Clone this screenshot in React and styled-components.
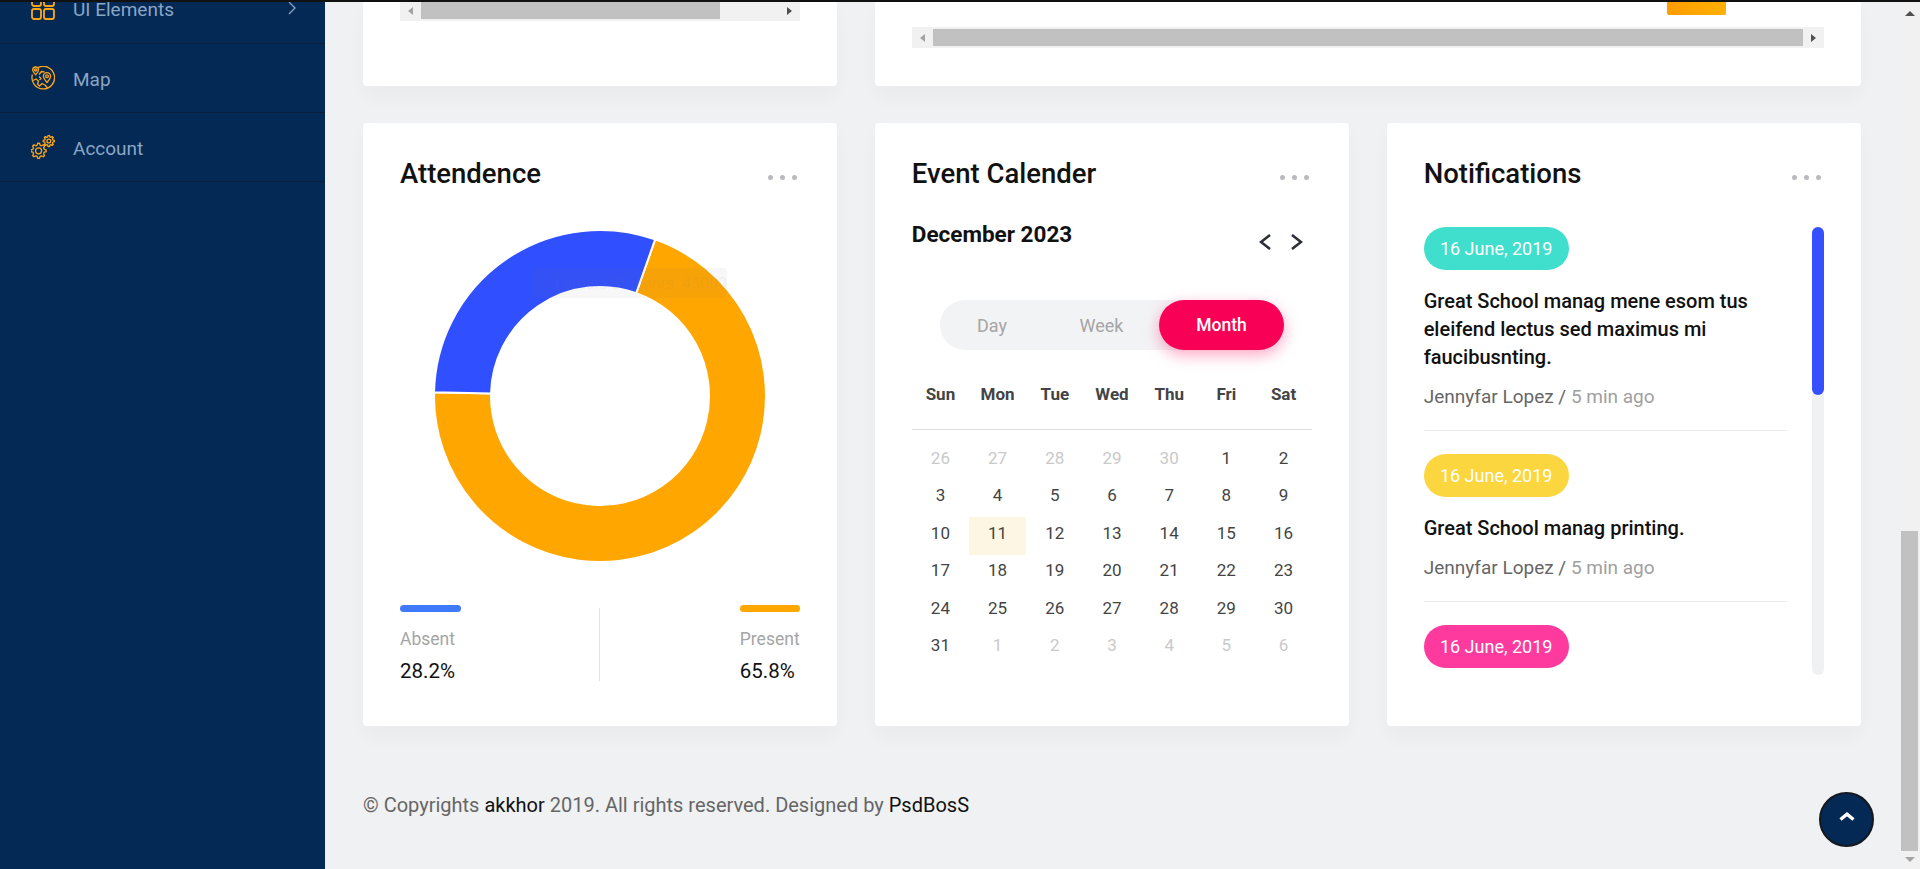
import React from 'react'
import styled, { createGlobalStyle } from 'styled-components'

const GlobalStyle = createGlobalStyle`
  * { box-sizing: border-box; }
  html, body { margin: 0; padding: 0; height: 100%; overflow: hidden; }
  body { font-family: Roboto, "Liberation Sans", sans-serif; background: #f0f1f3; }
`

const Page = styled.div`
  position: relative;
  width: 1920px;
  height: 869px;
  overflow: hidden;
  display: flex;
  flex-direction: column;
  background: #f0f1f3;
`
const TopLine = styled.div`
  height: 2px;
  flex: none;
  background: #111;
`
const Body = styled.div`
  flex: 1;
  min-height: 0;
  display: flex;
`
const Sidebar = styled.aside`
  width: 325px;
  flex: none;
  overflow: hidden;
  background: #042954;
`
const NavList = styled.nav`
  margin-top: -27px;
`
const NavRow = styled.div`
  height: 69px;
  padding: 0 28px ${p => p.$first ? '2px' : '0'} 31px;
  display: flex;
  align-items: center;
  border-bottom: 1px solid #0a1f3d;
  font-size: 19px;
  color: #8ba5c4;
  svg { flex: none; }
`
const NavLabel = styled.span`
  margin: 2px 0 0 18px;
  flex: 1;
`
const Main = styled.main`
  flex: 1;
  min-width: 0;
  padding: 0 40px 0 38px;
`
const TopRow = styled.div`
  display: grid;
  grid-template-columns: repeat(3, 1fr);
  column-gap: 37.5px;
  margin-bottom: 37px;
`
const TopCard = styled.section`
  grid-column: span ${p => p.$span || 1};
  height: 84px;
  padding: 0 37px;
  overflow: hidden;
  background: #fff;
  border-radius: 0 0 4px 4px;
  box-shadow: 0 10px 20px rgba(0, 0, 0, 0.03);
`
const Bar = styled.div`
  width: 59px;
  height: 13px;
  margin: 0 98px 12px auto;
  border-radius: 0 0 2px 2px;
  background: linear-gradient(90deg, #ff9d00, #ffb000);
`
const Strip = styled.div`
  display: grid;
  grid-template-columns: 21px 1fr 21px;
  height: 21px;
  margin-top: ${p => p.$clipped ? '-2px' : '0'};
  background: #f1f1f1;
`
const StripEnd = styled.div`
  display: flex;
  align-items: center;
  justify-content: center;
`
const StripTrack = styled.div`
  padding: 2px 0;
`
const StripThumb = styled.div`
  width: ${p => p.$width};
  height: 100%;
  background: #c1c1c1;
`
const Cards = styled.div`
  display: grid;
  grid-template-columns: repeat(3, 1fr);
  column-gap: 37.5px;
`
const Card = styled.section`
  height: 603px;
  padding: 30px 37px 0;
  background: #fff;
  border-radius: 4px;
  box-shadow: 0 10px 20px rgba(0, 0, 0, 0.03);
`
const CardHead = styled.header`
  height: 40px;
  display: flex;
  align-items: center;
  justify-content: space-between;
`
const CardTitle = styled.h3`
  margin: 0;
  font-size: 27.5px;
  font-weight: 500;
  color: #111;
`
const Dots = styled.div`
  display: flex;
  gap: 7px;
  margin: 8px 3px 0 0;
  span {
    width: 5px;
    height: 5px;
    border-radius: 50%;
    background: #b9b9c0;
  }
`
const DonutBox = styled.div`
  position: relative;
  height: 334px;
  margin-top: 36px;
  display: flex;
  justify-content: center;
`
const Tooltip = styled.div`
  position: absolute;
  left: 132px;
  top: 39px;
  width: 195px;
  height: 30px;
  padding-left: 6px;
  display: flex;
  align-items: center;
  gap: 3px;
  border-radius: 4px;
  font-size: 16px;
  white-space: nowrap;
  color: rgba(128, 128, 150, 0.08);
  background: rgba(120, 120, 120, 0.06);
  i {
    width: 16px;
    height: 16px;
    background: rgba(60, 80, 255, 0.07);
  }
`
const Legend = styled.div`
  display: flex;
  justify-content: space-between;
  margin-top: 42px;
`
const LegendItem = styled.div`
  width: 60.5px;
`
const LegendBar = styled.div`
  height: 7px;
  border-radius: 4px;
  background: ${p => p.$color};
`
const LegendLabel = styled.div`
  margin-top: 15px;
  font-size: 17.5px;
  line-height: 24px;
  color: #a5a5a5;
`
const LegendValue = styled.div`
  margin-top: 8px;
  font-size: 20.5px;
  line-height: 24px;
  font-weight: 400;
  color: #111;
`
const LegendRule = styled.div`
  width: 1px;
  height: 73px;
  margin: 3px 1px 0 0;
  background: #e3e3e3;
`
const MonthRow = styled.div`
  height: 107px;
  padding-top: 28px;
  display: flex;
  justify-content: space-between;
`
const MonthName = styled.div`
  font-size: 22.5px;
  line-height: 26px;
  font-weight: 700;
  color: #111;
`
const MonthNav = styled.div`
  display: flex;
  gap: 20px;
  margin: 13px 9px 0 0;
  height: 16px;
`
const Toggle = styled.div`
  width: 344px;
  height: 50px;
  margin: 0 auto;
  display: flex;
  border-radius: 25px;
  background: #f2f3f5;
`
const ToggleItem = styled.div`
  flex: ${p => p.$grow};
  display: flex;
  align-items: center;
  justify-content: center;
  border-radius: 25px;
  font-size: ${p => p.$active ? '17.5px' : '18px'};
  font-weight: ${p => p.$active ? 500 : 400};
  color: ${p => p.$active ? '#fff' : '#a5a5a5'};
  background: ${p => p.$active ? '#f80056' : 'transparent'};
  box-shadow: ${p => p.$active ? '0 5px 15px rgba(248, 0, 86, 0.35)' : 'none'};
`
const Weekdays = styled.div`
  display: grid;
  grid-template-columns: repeat(7, 1fr);
  padding: 32px 0 23px;
  border-bottom: 1px solid #dedede;
  font-size: 17px;
  line-height: 24px;
  font-weight: 700;
  color: #444;
  text-align: center;
`
const DayGrid = styled.div`
  display: grid;
  grid-template-columns: repeat(7, 1fr);
  grid-auto-rows: 37.5px;
  margin-top: 12px;
`
const Day = styled.div`
  padding-bottom: 6px;
  display: flex;
  align-items: center;
  justify-content: center;
  font-size: 17px;
  color: ${p => p.$muted ? '#c9c9c9' : '#444'};
  background: ${p => p.$today ? '#fdf6e3' : 'transparent'};
`
const NoticeBody = styled.div`
  height: 448px;
  margin-top: 34px;
  display: flex;
  justify-content: space-between;
`
const NoticeList = styled.div`
  width: 363px;
  overflow: hidden;
`
const Notice = styled.article`
  padding-bottom: 20.5px;
  margin-bottom: 23.5px;
  border-bottom: 1px solid #ececec;
`
const DatePill = styled.div`
  width: 145px;
  height: 42.5px;
  display: flex;
  align-items: center;
  justify-content: center;
  border-radius: 22px;
  font-size: 18px;
  color: #fff;
  background: ${p => p.$color};
`
const NoticeText = styled.p`
  margin: 17.5px 0 14px;
  font-size: 20px;
  line-height: 28px;
  font-weight: 500;
  color: #111;
`
const NoticeMeta = styled.div`
  font-size: 19px;
  line-height: 24px;
  color: #666;
  span { color: #a0a0a0; }
`
const ListTrack = styled.div`
  width: 12px;
  border-radius: 6px;
  background: #f0f1f3;
`
const ListThumb = styled.div`
  height: 168px;
  border-radius: 6px;
  background: #364fff;
`
const Footer = styled.footer`
  padding-top: 67px;
  font-size: 20px;
  line-height: 24px;
  color: #666;
  a { color: #111; }
`
const PageBar = styled.div`
  width: 19px;
  flex: none;
  padding-right: 2px;
  display: flex;
  flex-direction: column;
  background: #f1f1f1;
`
const PageArrow = styled.div`
  height: ${p => p.$height}px;
  flex: none;
  display: flex;
  align-items: ${p => p.$align};
  justify-content: center;
  padding: ${p => p.$pad};
`
const PageThumb = styled.div`
  height: 320px;
  flex: none;
  background: #c1c1c1;
`
const BackTop = styled.div`
  position: absolute;
  left: 1819px;
  top: 792px;
  width: 55px;
  height: 55px;
  padding-bottom: 6px;
  display: flex;
  align-items: center;
  justify-content: center;
  border: 2px solid #14181f;
  border-radius: 50%;
  background: #042954;
`

const ORANGE = '#ffa616'

function Triangle({ dir, fill }) {
  const pts = {
    left: '5,0 5,8 0,4',
    right: '0,0 0,8 5,4',
    up: '0,5 10,5 5,0',
    down: '0,0 10,0 5,5',
  }
  const w = dir === 'up' || dir === 'down' ? 10 : 5
  const h = dir === 'up' || dir === 'down' ? 5 : 8
  return (
    <svg width={w} height={h} viewBox={`0 0 ${w} ${h}`}>
      <polygon points={pts[dir]} fill={fill} />
    </svg>
  )
}

function ScrollStrip({ thumb, clipped }) {
  return (
    <Strip $clipped={clipped}>
      <StripEnd><Triangle dir="left" fill="#a3a3a3" /></StripEnd>
      <StripTrack><StripThumb $width={thumb} /></StripTrack>
      <StripEnd><Triangle dir="right" fill="#505050" /></StripEnd>
    </Strip>
  )
}

function GridIcon() {
  return (
    <svg width="24" height="24" viewBox="0 0 24 24" fill="none" stroke={ORANGE} strokeWidth="1.8">
      <rect x="1" y="1" width="9" height="9" rx="2" />
      <rect x="13" y="1" width="10" height="9" rx="2" />
      <rect x="1" y="13" width="9" height="10" rx="2" />
      <rect x="13" y="13" width="10" height="10" rx="2" />
    </svg>
  )
}

function MapIcon() {
  return (
    <svg width="24" height="24" viewBox="0 0 24 24" fill="none" stroke={ORANGE} strokeWidth="1.3" strokeLinejoin="round">
      <path d="M7 1.6A11.3 11.3 0 1 1 1.4 8.5" />
      <path d="M4.6 8.8C2.9 6.8 1.7 5.5 1.7 3.9a2.9 2.9 0 0 1 5.8 0c0 1.6-1.2 2.9-2.9 4.9z" />
      <circle cx="4.6" cy="3.9" r="1.1" />
      <path d="M16 16.5c-2.2-2.7-3.6-4.2-3.6-6.2a3.6 3.6 0 0 1 7.2 0c0 2-1.4 3.5-3.6 6.2z" />
      <circle cx="16" cy="10.3" r="1.4" />
      <path d="M8 8.5l2.5-3 3 .5M2 14.5l3-1.5 2.5 2-1 3 2 2 2.5-2.5 3 1.5 2.5 3M8 10.5l2 2-1.5 1.5" />
    </svg>
  )
}

function gearPath(cx, cy, outer, inner, teeth) {
  const pts = []
  const step = (Math.PI * 2) / teeth
  for (let i = 0; i < teeth; i++) {
    const a = i * step
    const radii = [[-0.32, inner], [-0.16, outer], [0.16, outer], [0.32, inner]]
    radii.forEach(([f, r]) => {
      const t = a + f * step
      pts.push(`${(cx + r * Math.cos(t)).toFixed(2)},${(cy + r * Math.sin(t)).toFixed(2)}`)
    })
  }
  return `M${pts.join('L')}Z`
}

function GearsIcon() {
  return (
    <svg width="24" height="24" viewBox="0 0 24 24" fill="none" stroke={ORANGE} strokeWidth="1.3" strokeLinejoin="round">
      <path d={gearPath(7.6, 15.8, 7.6, 5.8, 8)} />
      <circle cx="7.6" cy="15.8" r="3" />
      <path d={gearPath(17.8, 6, 5.6, 4.2, 8)} />
      <circle cx="17.8" cy="6" r="1.9" />
    </svg>
  )
}

function Chevron({ dir, color = '#2b2f38', width = 12, height = 16, stroke = 2.6 }) {
  const d = dir === 'left'
    ? `M${width - 1} 1L2 ${height / 2}L${width - 1} ${height - 1}`
    : `M1 1L${width - 2} ${height / 2}L1 ${height - 1}`
  return (
    <svg width={width} height={height} viewBox={`0 0 ${width} ${height}`} fill="none" stroke={color} strokeWidth={stroke}>
      <path d={d} />
    </svg>
  )
}

function AngleUp() {
  return (
    <svg width="16" height="9" viewBox="0 0 16 9" fill="none" stroke="#fff" strokeWidth="3.4">
      <path d="M1.5 7.5L8 2.2L14.5 7.5" />
    </svg>
  )
}

// clockwise from 12 o'clock, in degrees
function arc(from, to, R, r, c) {
  const p = (deg, rad) => {
    const t = ((deg - 90) * Math.PI) / 180
    return `${(c + rad * Math.cos(t)).toFixed(2)} ${(c + rad * Math.sin(t)).toFixed(2)}`
  }
  const big = to - from > 180 ? 1 : 0
  return `M${p(from, R)}A${R} ${R} 0 ${big} 1 ${p(to, R)}L${p(to, r)}A${r} ${r} 0 ${big} 0 ${p(from, r)}Z`
}

function Donut() {
  return (
    <svg width="334" height="334" viewBox="0 0 334 334">
      <path d={arc(19.4, 271.3, 166, 109, 167)} fill="#ffa601" stroke="#fff" strokeWidth="2" />
      <path d={arc(271.3, 379.4, 166, 109, 167)} fill="#304ffe" stroke="#fff" strokeWidth="2" />
    </svg>
  )
}

const before = [26, 27, 28, 29, 30]
const after = [1, 2, 3, 4, 5, 6]
const month = Array.from({ length: 31 }, (_, i) => i + 1)

const notices = [
  { color: '#40dfcd', text: 'Great School manag mene esom tus eleifend lectus sed maximus mi faucibusnting.' },
  { color: '#fbd63f', text: 'Great School manag printing.' },
  { color: '#fe3a9f' },
]

export default function App() {
  return (
    <Page>
      <GlobalStyle />
      <TopLine />
      <Body>
        <Sidebar>
          <NavList>
            <NavRow $first>
              <GridIcon />
              <NavLabel>UI Elements</NavLabel>
              <Chevron dir="right" color="#8ba5c4" width={9} height={14} stroke={1.3} />
            </NavRow>
            <NavRow><MapIcon /><NavLabel>Map</NavLabel></NavRow>
            <NavRow><GearsIcon /><NavLabel>Account</NavLabel></NavRow>
          </NavList>
        </Sidebar>
        <Main>
          <TopRow>
            <TopCard><ScrollStrip thumb="83.5%" clipped /></TopCard>
            <TopCard $span={2}>
              <Bar />
              <ScrollStrip thumb="100%" />
            </TopCard>
          </TopRow>
          <Cards>
            <Card>
              <CardHead>
                <CardTitle>Attendence</CardTitle>
                <Dots><span /><span /><span /></Dots>
              </CardHead>
              <DonutBox>
                <Donut />
                <Tooltip><i />Female Students: 45000</Tooltip>
              </DonutBox>
              <Legend>
                <LegendItem>
                  <LegendBar $color="#3f7afc" />
                  <LegendLabel>Absent</LegendLabel>
                  <LegendValue>28.2%</LegendValue>
                </LegendItem>
                <LegendRule />
                <LegendItem>
                  <LegendBar $color="#ffa601" />
                  <LegendLabel>Present</LegendLabel>
                  <LegendValue>65.8%</LegendValue>
                </LegendItem>
              </Legend>
            </Card>
            <Card>
              <CardHead>
                <CardTitle>Event Calender</CardTitle>
                <Dots><span /><span /><span /></Dots>
              </CardHead>
              <MonthRow>
                <MonthName>December 2023</MonthName>
                <MonthNav>
                  <Chevron dir="left" />
                  <Chevron dir="right" />
                </MonthNav>
              </MonthRow>
              <Toggle>
                <ToggleItem $grow="104">Day</ToggleItem>
                <ToggleItem $grow="115">Week</ToggleItem>
                <ToggleItem $grow="125" $active>Month</ToggleItem>
              </Toggle>
              <Weekdays>
                {['Sun', 'Mon', 'Tue', 'Wed', 'Thu', 'Fri', 'Sat'].map(d => <div key={d}>{d}</div>)}
              </Weekdays>
              <DayGrid>
                {before.map(d => <Day key={`b${d}`} $muted>{d}</Day>)}
                {month.map(d => <Day key={d} $today={d === 11}>{d}</Day>)}
                {after.map(d => <Day key={`a${d}`} $muted>{d}</Day>)}
              </DayGrid>
            </Card>
            <Card>
              <CardHead>
                <CardTitle>Notifications</CardTitle>
                <Dots><span /><span /><span /></Dots>
              </CardHead>
              <NoticeBody>
                <NoticeList>
                  {notices.map((n, i) => (
                    <Notice key={i}>
                      <DatePill $color={n.color}>16 June, 2019</DatePill>
                      {n.text && <NoticeText>{n.text}</NoticeText>}
                      {n.text && <NoticeMeta>Jennyfar Lopez / <span>5 min ago</span></NoticeMeta>}
                    </Notice>
                  ))}
                </NoticeList>
                <ListTrack><ListThumb /></ListTrack>
              </NoticeBody>
            </Card>
          </Cards>
          <Footer>
            © Copyrights <a>akkhor</a> 2019. All rights reserved. Designed by <a>PsdBosS</a>
          </Footer>
        </Main>
        <PageBar>
          <PageArrow $height={529} $align="flex-start" $pad="9px 0 0"><Triangle dir="up" fill="#505050" /></PageArrow>
          <PageThumb />
          <PageArrow $height={16} $align="center" $pad="0"><Triangle dir="down" fill="#a3a3a3" /></PageArrow>
        </PageBar>
      </Body>
      <BackTop><AngleUp /></BackTop>
    </Page>
  )
}
